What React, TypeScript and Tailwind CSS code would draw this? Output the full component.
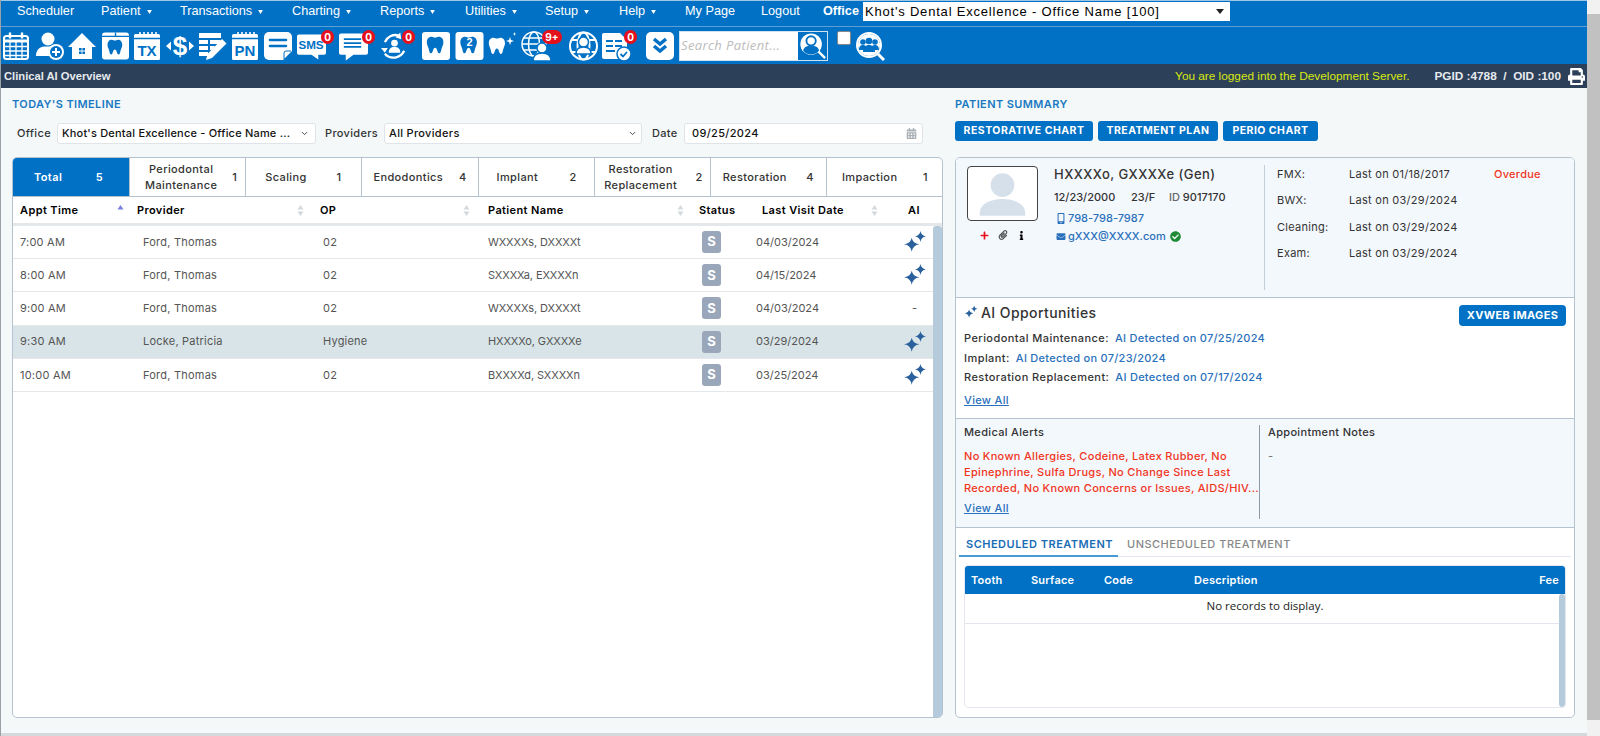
// Clinical AI Overview screen: legacy nav + toolbar on top, timeline table left, patient summary right.
import type { ReactNode } from 'react';
import { ChevronDown } from 'lucide-react';
import { FaCalendarAlt, FaCheckCircle, FaEnvelope, FaInfo, FaMobileAlt, FaPaperclip, FaPlus, FaPrint } from 'react-icons/fa';

const TOOTH = 'M7 3c-3 0-5 2.5-5 6 0 3 1.3 4.5 2 7 .6 2.2.8 5 2.7 5 2 0 1.8-6 4.3-6s2.3 6 4.3 6c1.9 0 2.1-2.8 2.7-5 .7-2.5 2-4 2-7 0-3.5-2-6-5-6-2 0-2.6 1-4 1s-2-1-4-1z';

const navItems = [
  { label: 'Scheduler', w: 'w-[84px]' },
  { label: 'Patient', w: 'w-[79px]', caret: true },
  { label: 'Transactions', w: 'w-[112px]', caret: true },
  { label: 'Charting', w: 'w-[88px]', caret: true },
  { label: 'Reports', w: 'w-[85px]', caret: true },
  { label: 'Utilities', w: 'w-[80px]', caret: true },
  { label: 'Setup', w: 'w-[74px]', caret: true },
  { label: 'Help', w: 'w-[66px]', caret: true },
  { label: 'My Page', w: 'w-[76px]' },
  { label: 'Logout', w: 'w-[62px]' },
];

// pl/pr keep each count where the real tab strip puts it
const tabs = [
  { label: 'Total', n: 5, pad: 'pl-[21px] pr-[26px]' },
  { label: 'Periodontal Maintenance', n: 1, pad: 'pl-[5px] pr-[8px]', two: true },
  { label: 'Scaling', n: 1, pad: 'pl-[19px] pr-[20px]' },
  { label: 'Endodontics', n: 4, pad: 'pl-[11px] pr-[11px]' },
  { label: 'Implant', n: 2, pad: 'pl-[18px] pr-[17px]' },
  { label: 'Restoration Replacement', n: 2, pad: 'pl-0 pr-[7px]', two: true },
  { label: 'Restoration', n: 4, pad: 'pl-[12px] pr-[12px]' },
  { label: 'Impaction', n: 1, pad: 'pl-[15px] pr-[14px]' },
];

const rows = [
  { time: '7:00 AM', provider: 'Ford, Thomas', op: '02', patient: 'WXXXXs, DXXXXt', date: '04/03/2024', ai: true },
  { time: '8:00 AM', provider: 'Ford, Thomas', op: '02', patient: 'SXXXXa, EXXXXn', date: '04/15/2024', ai: true },
  { time: '9:00 AM', provider: 'Ford, Thomas', op: '02', patient: 'WXXXXs, DXXXXt', date: '04/03/2024', ai: false },
  { time: '9:30 AM', provider: 'Locke, Patricia', op: 'Hygiene', patient: 'HXXXXo, GXXXXe', date: '03/29/2024', ai: true, selected: true },
  { time: '10:00 AM', provider: 'Ford, Thomas', op: '02', patient: 'BXXXXd, SXXXXn', date: '03/25/2024', ai: true },
];

const GRID = 'grid grid-cols-[117px_183px_167px_212px_63px_145px_34px]';

function Badge({ children, wide }: { children: ReactNode; wide?: boolean }) {
  return (
    <span
      className={`absolute -top-[1px] -right-[3px] flex h-[14px] items-center justify-center rounded-full bg-[#e4101c] text-[10px] leading-none font-bold text-white ${wide ? 'w-[20px]' : 'w-[13px]'}`}
    >
      {children}
    </span>
  );
}

// Tool wrapper: a box holding the drawing, with room for a count badge on top
function Tool({ ml, w, badge, wide, children }: { ml: string; w: string; badge?: string; wide?: boolean; children: ReactNode }) {
  return (
    <div className={`relative h-[30px] shrink-0 ${ml} ${w}`}>
      {children}
      {badge && <Badge wide={wide}>{badge}</Badge>}
    </div>
  );
}

function ToothCard({ label, rings }: { label?: string; rings?: boolean }) {
  return (
    <svg viewBox="0 0 28 30" className="h-full w-full">
      <rect x="0" y="1" width="28" height="28" rx="3" fill="#fff" />
      <path d={TOOTH} fill="#0071c5" transform={rings ? 'translate(4 6) scale(.85)' : 'translate(3 3) scale(.92)'} />
      {rings && <path d="M0 5h28M14 1v4" stroke="#0071c5" strokeWidth="1.4" />}
      {label && (
        <text x="14" y="15" fontSize="11" fontWeight="700" fill="#fff" textAnchor="middle" fontFamily="Liberation Sans">
          {label}
        </text>
      )}
    </svg>
  );
}

function Toolbar() {
  return (
    <div className="flex h-[37px] items-center bg-[#0071c5] pt-[1px]">
      <Tool ml="ml-[2px]" w="w-[26px]">
        <svg viewBox="0 0 26 30" className="h-full w-full" fill="none" stroke="#fff">
          <rect x="1" y="5" width="24" height="23" rx="2.5" strokeWidth="2" />
          <path d="M1 10h24" strokeWidth="3" />
          <path d="M7 1.5v6M19 1.5v6" strokeWidth="2.4" />
          <path d="M1 15.5h24M1 20h24M1 24.5h24M7 11v17M13 11v17M19 11v17" strokeWidth="1.3" />
        </svg>
      </Tool>
      <Tool ml="ml-[7px]" w="w-[29px]">
        <svg viewBox="0 0 29 30" className="h-full w-full" fill="#fff">
          <circle cx="12" cy="8" r="6.5" />
          <path d="M0 25c0-6 4-9.5 8-9.5h8c2 0 3 .5 3 .5-3 2-5 5-4 9z" />
          <circle cx="20" cy="21" r="8" />
          <circle cx="20" cy="21" r="6" fill="#0071c5" />
          <path d="M19 17h2v3h3v2h-3v3h-2v-3h-3v-2h3z" />
        </svg>
      </Tool>
      <Tool ml="ml-[3px]" w="w-[28px]">
        <svg viewBox="0 0 28 30" className="h-full w-full" fill="#fff">
          <path d="M14 2 0 16h4v12h20V16h4z" />
          <path d="M11 17h6v6h-6z" fill="#0071c5" />
          <path d="M13.6 17h.8v6h-.8zM11 19.6h6v.8h-6z" />
        </svg>
      </Tool>
      <Tool ml="ml-[6px]" w="w-[27px]">
        <ToothCard rings />
      </Tool>
      <Tool ml="ml-[5px]" w="w-[26px]">
        <svg viewBox="0 0 26 30" className="h-full w-full">
          <rect x="0" y="3" width="26" height="26" rx="1.5" fill="#fff" />
          <path d="M6 1v6M10 1v6M14 1v6M18 1v6M22 1v6" stroke="#fff" strokeWidth="1.6" />
          <path d="M0 7.5h26" stroke="#0071c5" strokeWidth="1.5" />
          <text x="13" y="25" fontSize="15" fontWeight="700" fill="#0071c5" textAnchor="middle" fontFamily="Liberation Sans">TX</text>
        </svg>
      </Tool>
      <Tool ml="ml-[6px]" w="w-[28px]">
        <div className="relative flex h-full w-full items-center justify-center font-['Liberation_Sans',sans-serif] text-[26px] leading-none font-bold text-white">
          $
          <svg viewBox="0 0 28 30" className="absolute inset-0 h-full w-full" fill="#fff">
            <path d="M0 15l5-4.5v9zM28 15l-5-4.5v9z" />
          </svg>
        </div>
      </Tool>
      <Tool ml="ml-[5px]" w="w-[28px]">
        <svg viewBox="0 0 28 30" className="h-full w-full" fill="#fff">
          <path d="M0 2h22v5H0zM0 9h9v4H0zM11 9h11l-3 4h-8zM0 15h9v4H0zM11 15h5l-3 4h-2zM0 21h9v4H0z" />
          <path d="M23 8l4.5 4.5L13 27l-6 2 1.5-6z" />
        </svg>
      </Tool>
      <Tool ml="ml-[5px]" w="w-[26px]">
        <svg viewBox="0 0 26 30" className="h-full w-full">
          <rect x="0" y="3" width="26" height="26" rx="1.5" fill="#fff" />
          <path d="M6 1v6M10 1v6M14 1v6M18 1v6M22 1v6" stroke="#fff" strokeWidth="1.6" />
          <path d="M0 7.5h26" stroke="#0071c5" strokeWidth="1.5" />
          <text x="13" y="25" fontSize="15" fontWeight="700" fill="#0071c5" textAnchor="middle" fontFamily="Liberation Sans">PN</text>
        </svg>
      </Tool>
      <Tool ml="ml-[6px]" w="w-[28px]">
        <svg viewBox="0 0 28 30" className="h-full w-full">
          <path d="M5 1h18a5 5 0 0 1 5 5v14l-9 9H5a5 5 0 0 1-5-5V6a5 5 0 0 1 5-5z" fill="#fff" />
          <path d="M6 9h16M6 15h16" stroke="#0071c5" strokeWidth="2.6" strokeLinecap="round" />
          <path d="M20 28v-6a2 2 0 0 1 2-2h5" stroke="#0071c5" strokeWidth="1" fill="none" />
        </svg>
      </Tool>
      <Tool ml="ml-[5px]" w="w-[34px]" badge="0">
        <svg viewBox="0 0 30 30" className="h-full w-[29px]">
          <path d="M2 3h26a2 2 0 0 1 2 2v17a2 2 0 0 1-2 2h-6v5l-7-5H2a2 2 0 0 1-2-2V5a2 2 0 0 1 2-2z" fill="#fff" />
          <text x="14.5" y="18" fontSize="12" fontWeight="700" fill="#0071c5" textAnchor="middle" fontFamily="Liberation Sans">SMS</text>
        </svg>
      </Tool>
      <Tool ml="ml-[8px]" w="w-[33px]" badge="0">
        <svg viewBox="0 0 30 30" className="h-full w-[29px]">
          <path d="M2 2h26a2 2 0 0 1 2 2v18a2 2 0 0 1-2 2H15l-8 6v-6H2a2 2 0 0 1-2-2V4a2 2 0 0 1 2-2z" fill="#fff" />
          <path d="M5 8h18M5 12h18M5 16h18" stroke="#0071c5" strokeWidth="1.8" />
        </svg>
      </Tool>
      <Tool ml="ml-[9px]" w="w-[31px]" badge="0">
        <svg viewBox="0 0 28 30" className="h-full w-[27px]" fill="none" stroke="#fff" strokeWidth="2.4">
          <path d="M24 20a12 12 0 0 1-20 3M4 11a12 12 0 0 1 14-7" />
          <path d="M1 20l4 5 3-5z" fill="#fff" stroke="none" transform="translate(-1 -3)" />
          <path d="M20 1l1 7-6-2z" fill="#fff" stroke="none" />
          <circle cx="14" cy="12" r="3.5" fill="#fff" stroke="none" />
          <path d="M8 22c0-4 2-6 6-6s6 2 6 6z" fill="#fff" stroke="none" />
        </svg>
      </Tool>
      <Tool ml="ml-[10px]" w="w-[28px]">
        <ToothCard />
      </Tool>
      <Tool ml="ml-[5px]" w="w-[29px]">
        <ToothCard label="2" />
      </Tool>
      <Tool ml="ml-[4px]" w="w-[28px]">
        <svg viewBox="0 0 28 30" className="h-full w-full" fill="#fff">
          <path d={TOOTH} transform="translate(-1 4) scale(.9)" />
          <path d="M22 6l1 3 3 1-3 1-1 3-1-3-3-1 3-1zM26.5 1l.5 1.5 1 .5-1 .5-.5 1.5-.5-1.5-1-.5 1-.5z" />
        </svg>
      </Tool>
      <Tool ml="ml-[5px]" w="w-[38px]" badge="9+" wide>
        <svg viewBox="0 0 30 30" className="h-full w-[30px]" fill="none" stroke="#fff" strokeWidth="1.5">
          <circle cx="13" cy="13" r="12" />
          <ellipse cx="13" cy="13" rx="5.5" ry="12" />
          <path d="M1 13h24M3 7h20M3 19h20" />
          <circle cx="21" cy="17" r="5" fill="#fff" stroke="#0071c5" />
          <path d="M12 30c0-6 3-8 9-8s9 2 9 8z" fill="#fff" stroke="#0071c5" />
        </svg>
      </Tool>
      <Tool ml="ml-[10px]" w="w-[29px]">
        <svg viewBox="0 0 29 30" className="h-full w-full" fill="none" stroke="#fff" strokeWidth="2">
          <circle cx="14.5" cy="15" r="13.5" />
          <ellipse cx="14.5" cy="15" rx="6" ry="13.5" />
          <path d="M2 9h25M2 21h25" />
          <circle cx="14.5" cy="11" r="5" fill="#fff" stroke="#0071c5" strokeWidth="1.5" />
          <path d="M7 23c0-5 3-7 7.5-7s7.5 2 7.5 7z" fill="#fff" stroke="#0071c5" strokeWidth="1.5" />
        </svg>
      </Tool>
      <Tool ml="ml-[4px]" w="w-[32px]" badge="0">
        <svg viewBox="0 0 30 30" className="h-full w-[30px]">
          <path d="M2 2h16l7 7v19H2a2 2 0 0 1-2-2V4a2 2 0 0 1 2-2z" fill="#fff" />
          <path d="M4 10h7M13 10h7M4 15h7M13 15h7M4 20h9" stroke="#0071c5" strokeWidth="1.8" />
          <circle cx="22" cy="23" r="7" fill="#fff" stroke="#0071c5" strokeWidth="1.5" />
          <path d="M18.5 23l2.500 2.500 4-4.500" stroke="#0071c5" strokeWidth="1.8" fill="none" />
        </svg>
      </Tool>
      <Tool ml="ml-[12px]" w="w-[28px]">
        <svg viewBox="0 0 28 30" className="h-full w-full">
          <rect y="1" width="28" height="28" rx="5" fill="#fff" />
          <path d="M8 8l6 5 6-5M8 15l6 5 6-5" stroke="#0071c5" strokeWidth="3.5" fill="none" />
        </svg>
      </Tool>
      <div className="ml-[5px] flex h-[30px] w-[149px] shrink-0 items-stretch border border-[#cfe2f1] bg-white">
        <input
          placeholder="Search Patient..."
          className="min-w-0 flex-1 pl-[1px] font-['Open_Sans',sans-serif] text-[13px] tracking-[.03em] italic outline-none placeholder:text-[#bcbcbc]"
        />
        <svg viewBox="0 0 29 30" className="h-full w-[29px] shrink-0 bg-[#0071c5]" fill="none">
          <circle cx="13" cy="13" r="11.5" fill="#fff" />
          <circle cx="13" cy="9.5" r="5" fill="none" stroke="#0071c5" strokeWidth="2" />
          <path d="M4.5 20c1-4 4-5.500 8.500-5.500s7.500 1.500 8.500 5.500a11 11 0 0 1-17 0z" fill="#0071c5" />
          <path d="M21 21l7 7" stroke="#fff" strokeWidth="2.5" />
        </svg>
      </div>
      <input type="checkbox" className="mt-[3px] ml-[9px] h-[14px] w-[14px] appearance-none self-start rounded-[2px] border border-[#888] bg-white" />
      <Tool ml="ml-[5px]" w="w-[29px]">
        <svg viewBox="0 0 29 30" className="h-full w-full">
          <circle cx="13" cy="14" r="12" fill="#0071c5" stroke="#fff" strokeWidth="2" />
          <circle cx="13" cy="14" r="11" fill="#fff" />
          <circle cx="7" cy="11" r="2.8" fill="#0071c5" />
          <circle cx="19" cy="11" r="2.8" fill="#0071c5" />
          <circle cx="13" cy="10" r="3.3" fill="#0071c5" />
          <path d="M3 19c0-4 2-5 4-5s4 1 4 5zM15 19c0-4 2-5 4-5s4 1 4 5zM7 21c0-5 2.500-7 6-7s6 2 6 7z" fill="#0071c5" />
          <path d="M22 23l6 6" stroke="#fff" strokeWidth="3" />
        </svg>
      </Tool>
    </div>
  );
}

function Sparkles({ className }: { className?: string }) {
  return (
    <svg viewBox="0 0 22 22" className={className} fill="#2a619c">
      <path d="M8 7q.9 5.100 7 6-6.100.9-7 7-.9-6.100-7-7 6.100-.9 7-6z" />
      <path d="M16 1q.6 3.900 5 5-4.400.6-5 5-.6-4.400-5-5 4.400-1.100 5-5z" />
    </svg>
  );
}

function SortArrows({ active }: { active?: boolean }) {
  return (
    <svg viewBox="0 0 7 13" className="h-[13px] w-[7px] shrink-0">
      <path d="M3.5 1 6.5 5.5h-6z" fill={active ? '#7b7fdc' : '#d3d9dd'} />
      {!active && <path d="M3.5 12 .5 7.5h6z" fill="#d3d9dd" />}
    </svg>
  );
}

function HeadCell({ label, pl, pr, active, sort = true }: { label: string; pl: string; pr: string; active?: boolean; sort?: boolean }) {
  return (
    <div className={`flex items-center justify-between text-[11px] font-semibold tracking-[.035em] text-black ${pl} ${pr}`}>
      <span>{label}</span>
      {sort && <SortArrows active={active} />}
    </div>
  );
}

function Timeline() {
  return (
    <div className="flex w-[942px] shrink-0 flex-col pl-[11px]">
      <h2 className="mt-[10px] text-[11px] leading-[13px] font-semibold tracking-[.035em] text-[#1a78c2]">TODAY'S TIMELINE</h2>
      <div className="mt-[12px] flex h-[21px] items-center text-[11px] font-medium tracking-[.03em] text-[#333]">
        <label className="ml-[5px] w-[40px]">Office</label>
        <div className="flex h-full w-[259px] items-center justify-between rounded-[3px] border border-[#dfe4e8] bg-white pr-[6px] pl-[4px] tracking-[.018em] whitespace-nowrap text-[#111]">
          <span>Khot's Dental Excellence - Office Name ...</span>
          <ChevronDown size={9} className="shrink-0" />
        </div>
        <label className="ml-[9px] w-[59px]">Providers</label>
        <div className="flex h-full w-[258px] items-center justify-between rounded-[3px] border border-[#dfe4e8] bg-white pr-[4px] pl-[4px] text-[#111]">
          <span>All Providers</span>
          <ChevronDown size={9} className="shrink-0" />
        </div>
        <label className="ml-[10px] w-[32px]">Date</label>
        <div className="flex h-full w-[239px] items-center justify-between rounded-[3px] border border-[#dfe4e8] bg-white pr-[5px] pl-[7px] text-[#111]">
          <span>09/25/2024</span>
          <FaCalendarAlt size={11} className="text-[#a9b0b6]" />
        </div>
      </div>

      <div className="mt-[13px] flex h-[561px] flex-col overflow-hidden rounded-[5px] border border-[#b5c3d0] bg-white">
        <div className="grid h-[39px] shrink-0 grid-cols-8 border-b border-[#b5c3d0]">
          {tabs.map((t, i) => (
            <div
              key={t.label}
              className={`flex items-center justify-between text-[11px] leading-[16px] font-medium tracking-[.035em] ${t.pad} ${
                i === 0 ? 'bg-[#0071c5] font-semibold text-white' : 'border-l border-[#b5c3d0] text-[#333]'
              }`}
            >
              <span className={t.two ? 'w-[92px] text-center' : ''}>{t.label}</span>
              <span>{t.n}</span>
            </div>
          ))}
        </div>
        <div className={`${GRID} h-[29px] shrink-0 border-b-[3px] border-[#e5e8ea]`}>
          <HeadCell label="Appt Time" pl="pl-[7px]" pr="pr-[6px]" active />
          <HeadCell label="Provider" pl="pl-[7px]" pr="pr-[9px]" />
          <HeadCell label="OP" pl="pl-[7px]" pr="pr-[10px]" />
          <HeadCell label="Patient Name" pl="pl-[8px]" pr="pr-[8px]" />
          <HeadCell label="Status" pl="pl-[7px]" pr="pr-0" sort={false} />
          <HeadCell label="Last Visit Date" pl="pl-[7px]" pr="pr-[22px]" />
          <HeadCell label="AI" pl="pl-[8px]" pr="pr-0" sort={false} />
        </div>
        <div className="flex min-h-0 flex-1">
          <div className="min-w-0 flex-1">
            {rows.map((r) => (
              <div
                key={r.time}
                className={`${GRID} h-[33.2px] items-center border-b border-[#e5e8ea] text-[11px] tracking-[.02em] text-[#555] ${r.selected ? 'bg-[#d8e4e7]' : ''}`}
              >
                <span className="pl-[7px]">{r.time}</span>
                <span className="pl-[13px]">{r.provider}</span>
                <span className="pl-[10px]">{r.op}</span>
                <span className="pl-[8px] tracking-[-.01em]">{r.patient}</span>
                <span className="pl-[10px]">
                  <span className="flex h-[22px] w-[19px] items-center justify-center rounded-[3px] bg-[#9aa7ba] text-[13px] font-bold text-white">S</span>
                </span>
                <span className="pl-[1px] tracking-normal">{r.date}</span>
                <span className="pl-[3px]">
                  {r.ai ? <Sparkles className="h-[24px] w-[24px]" /> : <span className="pl-[9px]">-</span>}
                </span>
              </div>
            ))}
          </div>
          <div className="w-[9px] shrink-0 rounded-t-[3px] bg-[#b5cbdc]" />
        </div>
      </div>
    </div>
  );
}

function ChartButton({ children, w }: { children: ReactNode; w: string }) {
  return (
    <button className={`flex h-[20px] items-center justify-center rounded-[3px] bg-[#0071c5] text-[10.5px] font-bold tracking-[.045em] text-white ${w}`}>
      {children}
    </button>
  );
}

function Summary() {
  const recalls = [
    { label: 'FMX:', last: '01/18/2017', overdue: true },
    { label: 'BWX:', last: '03/29/2024' },
    { label: 'Cleaning:', last: '03/29/2024' },
    { label: 'Exam:', last: '03/29/2024' },
  ];
  const detections = [
    { label: 'Periodontal Maintenance:', date: '07/25/2024' },
    { label: 'Implant:', date: '07/23/2024' },
    { label: 'Restoration Replacement:', date: '07/17/2024' },
  ];
  return (
    <div className="ml-[12px] flex w-[620px] shrink-0 flex-col">
      <h2 className="mt-[10px] text-[11px] leading-[13px] font-semibold tracking-[.035em] text-[#1a78c2]">PATIENT SUMMARY</h2>
      <div className="mt-[10px] flex gap-[5px]">
        <ChartButton w="w-[138px]">RESTORATIVE CHART</ChartButton>
        <ChartButton w="w-[120px]">TREATMENT PLAN</ChartButton>
        <ChartButton w="w-[95px]">PERIO CHART</ChartButton>
      </div>

      <div className="mt-[16px] flex h-[561px] flex-col overflow-hidden rounded-[5px] border border-[#b5c3d0] bg-white">
        {/* patient header */}
        <div className="flex h-[140px] shrink-0 border-b border-[#b5c3d0] bg-[#f3f8fd] pt-[8px]">
          <div className="ml-[11px] w-[71px] shrink-0">
            <div className="flex h-[55px] items-end justify-center overflow-hidden rounded-[4px] border border-[#444] bg-white">
              <svg viewBox="0 0 70 54" className="h-[54px] w-[70px]" fill="#d6e0ea">
                <circle cx="35" cy="19" r="12" />
                <path d="M12 50v-3c0-9 11-14 23-14s23 5 23 14v3z" />
              </svg>
            </div>
            <div className="mt-[9px] flex items-center justify-center gap-[9px]">
              <FaPlus size={9} className="text-[#e8101c]" />
              <FaPaperclip size={10} className="text-[#555]" />
              <FaInfo size={9} className="text-black" />
            </div>
          </div>
          <div className="ml-[16px] w-[210px] shrink-0 text-[11px] font-medium text-[#333]">
            <div className="text-[13px] leading-[16px] tracking-[.035em]">HXXXXo, GXXXXe (Gen)</div>
            <div className="mt-[8px] flex leading-[14px]">
              <span className="w-[77px]">12/23/2000</span>
              <span className="w-[38px]">23/F</span>
              <span>
                <span className="text-[#666]">ID</span> 9017170
              </span>
            </div>
            <div className="mt-[7px] flex items-center leading-[14px] text-[#2a70bb]">
              <FaMobileAlt size={11} className="w-[14px]" />
              <span>798-798-7987</span>
            </div>
            <div className="mt-[4px] flex items-center leading-[14px] text-[#2a70bb]">
              <FaEnvelope size={9} className="w-[14px]" />
              <span>gXXX@XXXX.com</span>
              <FaCheckCircle size={11} className="ml-[4px] text-[#1d8a34]" />
            </div>
          </div>
          <div className="-mt-[1px] mb-[7px] flex-1 border-l border-[#c4ced6] pt-[2px] pl-[12px] text-[11px] tracking-[.025em] text-[#333]">
            {recalls.map((r) => (
              <div key={r.label} className="mb-[12.5px] flex h-[14px] items-center">
                <span className="w-[72px]">{r.label}</span>
                <span className="w-[145px]">Last on {r.last}</span>
                {r.overdue && <span className="font-medium text-[#f0351c]">Overdue</span>}
              </div>
            ))}
          </div>
        </div>

        {/* AI opportunities */}
        <div className="relative h-[121px] shrink-0 border-b border-[#b5c3d0] px-[8px] pt-[5px]">
          <div className="flex h-[18px] items-center text-[14px] font-medium tracking-[.03em] text-[#333]">
            <Sparkles className="mr-[3px] h-[14px] w-[14px]" />
            AI Opportunities
          </div>
          <button className="absolute top-[7px] right-[8px] h-[21px] w-[107px] rounded-[4px] bg-[#0071c5] text-[11px] font-bold tracking-[.03em] text-white">XVWEB IMAGES</button>
          <div className="mt-[10px] flex flex-col gap-[5.5px] text-[11px] leading-[14px] font-medium tracking-[.04em] text-[#333]">
            {detections.map((d) => (
              <div key={d.label}>
                {d.label}
                <span className="ml-[6px] tracking-[.025em] text-[#2a70bb]">AI Detected on {d.date}</span>
              </div>
            ))}
          </div>
          <a className="mt-[9px] inline-block text-[11px] leading-[14px] font-medium tracking-[.03em] text-[#2a70bb] underline">View All</a>
        </div>

        {/* alerts and notes */}
        <div className="flex h-[109px] shrink-0 border-b border-[#b5c3d0] bg-[#f3f8fd] pt-[6px] text-[11px] font-medium text-[#333]">
          <div className="mb-[8px] w-[304px] shrink-0 border-r border-[#8d99a3] pl-[8px]">
            <div className="leading-[14px] tracking-[.03em]">Medical Alerts</div>
            <p className="mt-[9px] w-[296px] text-[11px] leading-[16px] tracking-[.028em] text-[#f0351c]">
              No Known Allergies, Codeine, Latex Rubber, No Epinephrine, Sulfa Drugs, No Change Since Last Recorded, No Known Concerns or Issues, AIDS/HIV...
            </p>
            <a className="mt-[5px] inline-block leading-[14px] tracking-[.03em] text-[#2a70bb] underline">View All</a>
          </div>
          <div className="pl-[8px]">
            <div className="leading-[14px] tracking-[.03em]">Appointment Notes</div>
            <div className="mt-[9px] leading-[16px] text-[#777]">-</div>
          </div>
        </div>

        {/* treatment */}
        <div className="flex min-h-0 flex-1 flex-col px-[8px] pt-[5px]">
          <div className="-mx-[5px] flex h-[24px] shrink-0 border-b border-[#e4e8ee] text-[11px] leading-[23px] font-semibold tracking-[.045em] whitespace-nowrap">
            <div className="-mb-px w-[159px] border-b-2 border-[#4b9ad6] pl-[7px] text-[#1a6db5]">SCHEDULED TREATMENT</div>
            <div className="ml-[9px] font-medium text-[#888]">UNSCHEDULED TREATMENT</div>
          </div>
          <div className="mt-[8px] mb-[9px] flex min-h-0 flex-1 flex-col overflow-hidden rounded-[4px] border border-[#e4e8ee]">
            <div className="flex h-[28px] shrink-0 items-center bg-[#0071c5] text-[11px] font-semibold tracking-[.02em] text-white">
              <span className="w-[66px] pl-[6px]">Tooth</span>
              <span className="w-[73px]">Surface</span>
              <span className="w-[90px]">Code</span>
              <span className="flex-1">Description</span>
              <span className="pr-[6px]">Fee</span>
            </div>
            <div className="relative flex-1">
              <div className="flex h-[30px] items-center justify-center border-b border-[#e4e4f0] pb-[6px] font-['Open_Sans',sans-serif] text-[11.5px] text-[#222]">No records to display.</div>
              <div className="absolute top-0 right-0 bottom-0 w-[6px] rounded-[3px] bg-[#b5cbdc]" />
            </div>
          </div>
        </div>
      </div>
    </div>
  );
}

export default function App() {
  return (
    <div className="flex h-[736px] w-[1600px] overflow-hidden bg-[#f4f8f9] font-['Inter',sans-serif]">
      <div className="flex w-[1587px] shrink-0 flex-col border-l border-[#9aa2a8]">
        {/* top menu, old table-era font */}
        <div className="flex h-[27px] shrink-0 border-t border-b border-t-[#9cc6e6] border-b-[#5c9fd6] bg-[#0071c5] pt-[1px] pl-[16px] font-['Liberation_Sans',sans-serif] text-[12.7px] text-white">
          {navItems.map((n) => (
            <div key={n.label} className={`flex h-[19px] shrink-0 items-center ${n.w}`}>
              {n.label}
              {n.caret && (
                <svg viewBox="0 0 6 5" className="ml-[6px] h-[4px] w-[5px]" fill="#fff">
                  <path d="M0 0h6L3 5z" />
                </svg>
              )}
            </div>
          ))}
          <b className="flex h-[19px] w-[40px] items-center">Office</b>
          <div className="flex h-[19px] w-[367px] items-center justify-between bg-white pr-[6px] pl-[2px] text-[13px] tracking-[.8px] text-black">
            <span>Khot's Dental Excellence - Office Name [100]</span>
            <svg viewBox="0 0 8 5" className="h-[5px] w-[8px]" fill="#222">
              <path d="M0 0h8L4 5z" />
            </svg>
          </div>
        </div>
        <Toolbar />
        <div className="flex h-[24px] shrink-0 items-center bg-[#2d4059] pt-[1px] pr-[2px] pl-[3px] font-['Liberation_Sans',sans-serif] text-[11.8px] text-white">
          <b className="text-[11.2px] text-[#e6eaee]">Clinical AI Overview</b>
          <span className="ml-auto text-[#d6ea10]">You are logged into the Development Server.</span>
          <b className="ml-[25px] text-[#e6eaee]">PGID :4788 &nbsp;/&nbsp; OID :100</b>
          <FaPrint size={17} className="ml-[7px] text-white" />
        </div>
        <div className="flex min-h-0 flex-1">
          <Timeline />
          <Summary />
        </div>
        <div className="h-[3px] shrink-0 bg-[#d5d9dc]" />
      </div>
      <div className="flex w-[13px] shrink-0 flex-col bg-[#f1f1f1] pt-[14px]">
        <div className="flex-1 bg-[#c1c1c1]" />
        <div className="h-[16px]" />
      </div>
    </div>
  );
}
